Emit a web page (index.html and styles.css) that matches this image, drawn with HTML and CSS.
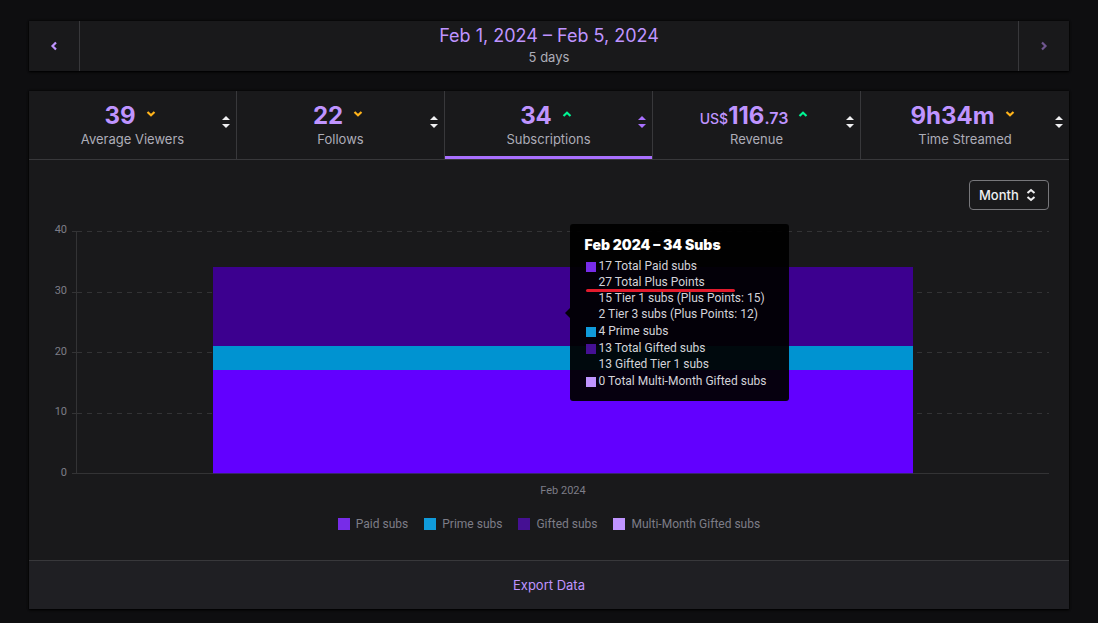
FILE: index.html
```html
<!DOCTYPE html>
<html lang="en">
<head>
<meta charset="utf-8">
<title>Channel Analytics</title>
<link rel="stylesheet" href="styles.css">
</head>
<body>
<svg class="defs" aria-hidden="true">
  <symbol id="down" viewBox="0 0 20 20"><path d="M6.500 8l3.500 3.200L13.500 8" fill="none" stroke="currentColor" stroke-width="2.200"/></symbol>
  <symbol id="up" viewBox="0 0 20 20"><path d="M6.500 12L10 8.800l3.500 3.200" fill="none" stroke="currentColor" stroke-width="2.200"/></symbol>
  <symbol id="sort" viewBox="0 0 20 20"><path d="M10 4l4 4H6zM10 16l4-4H6z" fill="currentColor"/></symbol>
</svg>
<main class="page">
  <header class="range">
    <button class="range-step" aria-label="Previous period"><svg class="icon" viewBox="0 0 20 20"><path d="M12 6.500L8.500 10l3.500 3.500" fill="none" stroke="currentColor" stroke-width="2.200"/></svg></button>
    <div class="range-text">
      <button class="range-title">Feb 1, 2024 – Feb 5, 2024</button>
      <span class="caption">5 days</span>
    </div>
    <button class="range-step range-next" aria-label="Next period" disabled><svg class="icon" viewBox="0 0 20 20"><path d="M8 6.500l3.500 3.500L8 13.500" fill="none" stroke="currentColor" stroke-width="2.200"/></svg></button>
  </header>

  <section class="panel">
    <nav class="stats">
      <button class="stat">
        <span class="stat-main"><span class="stat-value">39<svg class="icon down"><use href="#down"/></svg></span><span class="caption">Average Viewers</span></span>
        <svg class="icon sort"><use href="#sort"/></svg>
      </button>
      <button class="stat">
        <span class="stat-main"><span class="stat-value">22<svg class="icon down"><use href="#down"/></svg></span><span class="caption">Follows</span></span>
        <svg class="icon sort"><use href="#sort"/></svg>
      </button>
      <button class="stat active">
        <span class="stat-main"><span class="stat-value">34<svg class="icon up"><use href="#up"/></svg></span><span class="caption">Subscriptions</span></span>
        <svg class="icon sort"><use href="#sort"/></svg>
      </button>
      <button class="stat">
        <span class="stat-main"><span class="stat-value"><span><span class="currency">US$</span>116<span class="cents">.73</span></span><svg class="icon up"><use href="#up"/></svg></span><span class="caption">Revenue</span></span>
        <svg class="icon sort"><use href="#sort"/></svg>
      </button>
      <button class="stat">
        <span class="stat-main"><span class="stat-value">9h34m<svg class="icon down"><use href="#down"/></svg></span><span class="caption">Time Streamed</span></span>
        <svg class="icon sort"><use href="#sort"/></svg>
      </button>
    </nav>

    <div class="body">
      <div class="period">
        <select class="period-select" aria-label="Group by"><option>Month</option></select>
        <svg class="icon period-icon" viewBox="0 0 20 20"><path d="M6.500 8L10 5l3.500 3M6.500 12l3.500 3 3.500-3" fill="none" stroke="currentColor" stroke-width="2"/></svg>
      </div>

      <div class="chart">
        <div class="axis-y"><span>40</span><span>30</span><span>20</span><span>10</span><span>0</span></div>
        <div class="plot">
          <div class="lines"><i></i><i></i><i></i><i></i></div>
          <div class="bar">
            <div class="gifted-fill" style="flex-grow:13"></div>
            <div class="prime-fill" style="flex-grow:4"></div>
            <div class="paid-fill" style="flex-grow:17"></div>
          </div>
          <div class="tooltip" role="tooltip">
            <h2 class="tip-title">Feb 2024 – 34 Subs</h2>
            <div class="tip-group"><i class="swatch paid"></i><div><p class="tip-line">17 Total Paid subs</p><p class="tip-line marked">27 Total Plus Points</p><p class="tip-line">15 Tier 1 subs (Plus Points: 15)</p><p class="tip-line">2 Tier 3 subs (Plus Points: 12)</p></div></div>
            <div class="tip-group"><i class="swatch prime"></i><p class="tip-line">4 Prime subs</p></div>
            <div class="tip-group"><i class="swatch gifted"></i><div><p class="tip-line">13 Total Gifted subs</p><p class="tip-line">13 Gifted Tier 1 subs</p></div></div>
            <div class="tip-group"><i class="swatch multi"></i><p class="tip-line">0 Total Multi-Month Gifted subs</p></div>
          </div>
        </div>
        <div class="axis-x">Feb 2024</div>
      </div>

      <ul class="legend">
        <li><i class="swatch paid"></i>Paid subs</li>
        <li><i class="swatch prime"></i>Prime subs</li>
        <li><i class="swatch gifted"></i>Gifted subs</li>
        <li><i class="swatch multi"></i>Multi-Month Gifted subs</li>
      </ul>
    </div>

    <footer class="export"><a class="export-link" href="#export">Export Data</a></footer>
  </section>
</main>
</body>
</html>
```

FILE: styles.css
```css
* { box-sizing: border-box; }

body {
  margin: 0;
  background: #0e0e10;
  color: #adadb8;
  font: 13px/20px Inter, sans-serif;
}

button {
  padding: 0;
  border: 0;
  background: none;
  color: inherit;
  font: inherit;
}

.defs { position: absolute; width: 0; height: 0; }
.icon { display: block; flex: none; width: 20px; height: 20px; }

.page {
  display: flex;
  flex-direction: column;
  gap: 20px;
  padding: 21px 29px 14px;
}

.range,
.panel {
  background: #19191b;
  box-shadow: 0 1px 2px #000, 0 0 2px #000;
}

.range { display: flex; min-height: 50px; }
.range-step {
  display: grid;
  place-items: center;
  width: 51px;
  border-right: 1px solid #38383b;
  color: #bf94ff;
}
.range-next {
  border-right: 0;
  border-left: 1px solid #38383b;
  color: #6f568f;
}
.range-text {
  display: flex;
  flex: 1;
  flex-direction: column;
  align-items: center;
  justify-content: center;
}
.range-title { color: #bf94ff; font-size: 18px; line-height: 22px; }
.caption { font-size: 13px; line-height: 20px; color: #adadb8; }

.stats {
  display: grid;
  grid-template-columns: repeat(5, 1fr);
  border-bottom: 1px solid #38383b;
}
.stat {
  display: grid;
  align-items: center;
  border-right: 1px solid #38383b;
}
.stat:last-child { border-right: 0; }
.stat.active { box-shadow: inset 0 -3px #a970ff; }
.stat-main {
  grid-area: 1 / 1;
  display: flex;
  flex-direction: column;
  align-items: center;
  padding: 12px 0 10px;
}
.stat-value {
  display: flex;
  gap: 5px;
  color: #bf94ff;
  font-size: 24px;
  font-weight: 700;
  line-height: 26px;
}
.currency { font-size: 14px; font-weight: 500; line-height: 1; }
.cents { font-size: 16px; font-weight: 600; line-height: 1; }
.sort { grid-area: 1 / 1; justify-self: end; margin-bottom: 6px; color: #efeff1; }
.active .sort { color: #a970ff; }
.down { color: #ffb31a; }
.up { color: #00f593; }
.stat-value .icon { margin-top: 1px; }

.body {
  display: flex;
  flex-direction: column;
  padding: 20px 20px 26px;
}

.period { display: grid; align-items: center; align-self: flex-end; margin-bottom: 21px; }
.period-select {
  grid-area: 1 / 1;
  appearance: none;
  width: 80px;
  height: 30px;
  padding: 0 28px 0 9px;
  border: 1px solid #77777b;
  border-radius: 4px;
  background: none;
  color: #efeff1;
  font: 500 13px/20px Inter, sans-serif;
}
.period-icon { grid-area: 1 / 1; justify-self: end; margin-right: 8px; color: #efeff1; pointer-events: none; }

.chart {
  display: grid;
  grid-template-columns: 18px 1fr;
  column-gap: 5px;
  font-family: Roboto, sans-serif;
}
.axis-y {
  display: flex;
  flex-direction: column;
  justify-content: space-between;
  margin: -9px 0 -7px;
  color: #7d7d87;
  font-size: 11px;
  line-height: 16px;
  text-align: right;
}
.plot {
  position: relative;
  display: grid;
  height: 243px;
  background:
    linear-gradient(#333335, #333335) 4px 0 / 1px 100% no-repeat,
    linear-gradient(#333335, #333335) 0 100% / 100% 1px no-repeat;
}
.lines { grid-area: 1 / 1; display: flex; flex-direction: column; padding-bottom: 1px; }
.lines i {
  flex: 1;
  background:
    linear-gradient(#333335, #333335) 0 0 / 5px 1px no-repeat,
    repeating-linear-gradient(90deg, #333335 0 5px, transparent 5px 10px) 5px 0 / 100% 1px no-repeat;
}
.bar {
  grid-area: 1 / 1;
  align-self: end;
  display: flex;
  flex-direction: column;
  width: 71.7%;
  height: 85%;
  margin-left: calc(14% + 4px);
  border-bottom: 1px solid #38256b;
}
.gifted-fill { background: #3c008f; }
.prime-fill { background: #0093d1; }
.paid-fill { background: #6200ff; }
.axis-x {
  grid-column: 2;
  margin-top: 9px;
  padding-left: 5px;
  color: #7d7d87;
  font-size: 11px;
  line-height: 16px;
  text-align: center;
}

.swatch { flex: none; width: 12px; height: 12px; }
.paid { background: #772ce8; }
.prime { background: #109bdb; }
.gifted { background: #451093; }
.multi { background: #bf94ff; }

.tooltip {
  position: absolute;
  top: -7px;
  left: calc(50% + 9px);
  display: flex;
  flex-direction: column;
  gap: 1px;
  min-width: 219px;
  padding: 11px 14px 12px 15px;
  border-radius: 3px;
  background: rgb(0 0 0 / 94%);
  color: #d3d3d9;
  white-space: nowrap;
}
.tooltip::before {
  content: "";
  position: absolute;
  top: 84px;
  left: -5px;
  border: 5px solid transparent;
  border-left: 0;
  border-right-color: rgb(0 0 0 / 94%);
}
.tip-title { margin: 0 0 2px; color: #fff; font: 900 14px/20px Inter, sans-serif; }
.tip-group { display: flex; gap: 3px; padding-left: 1px; }
.tip-group .swatch { width: 10px; height: 10px; margin-top: 4px; }
.tip-line { margin: 0; font-size: 12px; line-height: 16px; }
.marked { display: flex; }
.marked::after {
  content: "";
  position: absolute;
  left: 16px;
  width: 149px;
  height: 3px;
  margin-top: 15px;
  border-radius: 2px;
  background: #e21b2d;
}

.legend {
  display: flex;
  flex-wrap: wrap;
  justify-content: center;
  gap: 16px;
  margin: 15px 0 0;
  padding: 0;
  color: #7d7d87;
  font-family: Roboto, sans-serif;
  font-size: 12px;
  list-style: none;
}
.legend li { display: flex; align-items: center; gap: 6px; }

.export {
  display: flex;
  justify-content: center;
  padding: 14px;
  border-top: 1px solid #38383b;
  background: #1f1f23;
}
.export-link { color: #bf94ff; text-decoration: none; }
```
